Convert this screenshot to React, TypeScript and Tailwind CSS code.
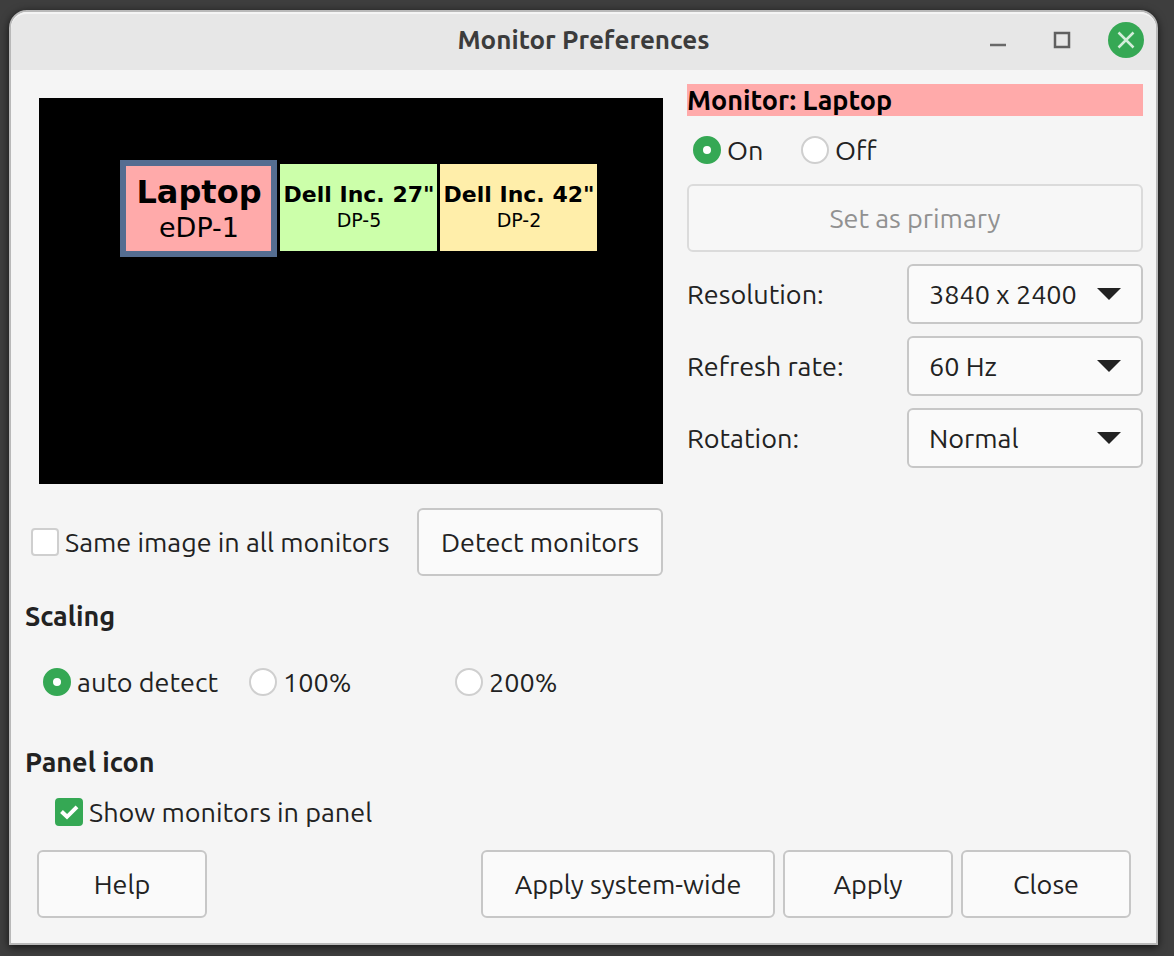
import { useState, type ButtonHTMLAttributes } from 'react';
import clsx from 'clsx';

interface MonitorInfo {
  name: string;
  port: string;
  tone: string;
}

const MONITORS: MonitorInfo[] = [
  { name: 'Laptop', port: 'eDP-1', tone: 'bg-[#ffaaaa]' },
  { name: 'Dell Inc. 27"', port: 'DP-5', tone: 'bg-[#ccffaa]' },
  { name: 'Dell Inc. 42"', port: 'DP-2', tone: 'bg-[#ffeeaa]' },
];

function Button({ className, ...props }: ButtonHTMLAttributes<HTMLButtonElement>) {
  return (
    <button
      type="button"
      className={clsx(
        'h-17 rounded-md border-2 border-[#c7c7c7] bg-[#fafafa] whitespace-nowrap disabled:border-[#dbdbdb] disabled:bg-[#f7f7f7] disabled:text-[#919191]',
        className
      )}
      {...props}
    />
  );
}

interface RadioProps {
  name: string;
  label: string;
  className?: string;
  defaultChecked?: boolean;
}

function Radio({ name, label, className, defaultChecked }: RadioProps) {
  return (
    <label className={clsx('flex h-7 items-center gap-1.5 whitespace-nowrap', className)}>
      <input
        type="radio"
        name={name}
        defaultChecked={defaultChecked}
        className="size-7 shrink-0 appearance-none rounded-full border-2 border-[#cfcfcf] bg-white checked:border-10 checked:border-[#35a854]"
      />
      {label}
    </label>
  );
}

function Checkbox({ label, defaultChecked }: { label: string; defaultChecked?: boolean }) {
  return (
    <label className="flex h-7 items-center gap-1.5 whitespace-nowrap">
      <span className="relative size-7 shrink-0">
        <input
          type="checkbox"
          defaultChecked={defaultChecked}
          className="peer block size-7 appearance-none rounded-[4px] border-2 border-[#cfcfcf] bg-white checked:border-[#35a854] checked:bg-[#35a854]"
        />
        <svg viewBox="0 0 28 28" className="pointer-events-none absolute inset-0 hidden size-7 peer-checked:block">
          <path d="M6.5 13.5 L12 18.8 L22 8.8" fill="none" stroke="#fff" strokeWidth="4" />
        </svg>
      </span>
      {label}
    </label>
  );
}

function SelectRow({ id, label, options }: { id: string; label: string; options: string[] }) {
  return (
    <div className="flex items-center justify-between">
      <label htmlFor={id}>{label}</label>
      <div className="relative w-[236px]">
        <select
          id={id}
          className="block h-15 w-full appearance-none rounded-md border-2 border-[#c7c7c7] bg-[#fafafa] pl-5"
        >
          {options.map((o) => (
            <option key={o}>{o}</option>
          ))}
        </select>
        <svg viewBox="0 0 24 12" className="pointer-events-none absolute top-6 right-[22px] h-3 w-6" fill="#222">
          <path d="M0 0h24L12 12z" />
        </svg>
      </div>
    </div>
  );
}

function TitleBar() {
  return (
    <header className="grid h-[58px] grid-cols-[1fr_auto_1fr] items-center rounded-t-2xl border-t-2 border-[#f4f4f4] bg-[#e7e7e7] pb-1">
      <h1 className="col-start-2 text-[26px] font-semibold text-[#3c3c3c]">Monitor Preferences</h1>
      <div className="flex justify-end gap-7 pr-3">
        <button type="button" aria-label="Minimize" className="size-9">
          <svg viewBox="0 0 36 36" className="size-9">
            <path d="M10 23h16" stroke="#696969" strokeWidth="2.5" />
          </svg>
        </button>
        <button type="button" aria-label="Maximize" className="size-9">
          <svg viewBox="0 0 36 36" className="size-9">
            <rect x="11" y="11" width="14" height="14" fill="none" stroke="#606060" strokeWidth="2.5" />
          </svg>
        </button>
        <button type="button" aria-label="Close window" className="size-9">
          <svg viewBox="0 0 36 36" className="size-9">
            <circle cx="18" cy="18" r="18" fill="#35a854" />
            <path d="M10.5 10.5l15 15M25.5 10.5l-15 15" stroke="#d3edda" strokeWidth="2.5" />
          </svg>
        </button>
      </div>
    </header>
  );
}

export default function App() {
  const [selected, setSelected] = useState(0);
  const current = MONITORS[selected];

  return (
    <div className="min-h-screen bg-[#3e3e3e] pt-2.5 pr-4 pb-[11px] pl-[9px] font-['Ubuntu','Noto_Sans',sans-serif] text-[27px] leading-8 text-[#222]">
      <div className="rounded-t-[18px] border-2 border-[#b9b9b9] bg-[#f5f5f5] shadow-[0_2px_8px_rgba(0,0,0,0.7)]">
        <TitleBar />

        <main className="flex gap-6 pt-3.5 pr-[13px] pl-3.5">
          <div className="min-w-0 flex-1">
            {/* Monitor layout area */}
            <div className="mt-3.5 ml-3.5 flex h-[386px] items-start justify-center gap-[3px] bg-black pt-[62px] pl-3.5 font-['DejaVu_Sans',sans-serif] text-black">
              {MONITORS.map((m, i) => (
                <button
                  key={m.port}
                  type="button"
                  onClick={() => setSelected(i)}
                  className={clsx(
                    'flex w-[157px] flex-col items-center pl-0.5 whitespace-nowrap',
                    m.tone,
                    i === selected ? 'h-[97px] border-6 border-[#556d91] pt-2.5' : 'mt-1 h-[87px] pt-[18px]'
                  )}
                >
                  <span className={clsx('font-bold', i === 0 ? 'text-[32px] leading-8' : 'text-[22px] leading-[26px]')}>
                    {m.name}
                  </span>
                  <span className={i === 0 ? 'text-[27px] leading-10' : 'text-[19px] leading-6'}>{m.port}</span>
                </button>
              ))}
            </div>

            <div className="mt-6 flex items-center justify-between pl-1.5">
              <Checkbox label="Same image in all monitors" />
              <Button className="w-[246px]">Detect monitors</Button>
            </div>

            <h2 className="mt-6 font-bold">Scaling</h2>
            <div className="mt-9 flex pl-[18px]">
              <Radio name="scaling" label="auto detect" className="w-[206px]" defaultChecked />
              <Radio name="scaling" label="100%" className="w-[206px]" />
              <Radio name="scaling" label="200%" />
            </div>

            <h2 className="mt-[50px] font-bold">Panel icon</h2>
            <div className="mt-5 pl-[30px]">
              <Checkbox label="Show monitors in panel" defaultChecked />
            </div>
          </div>

          <div className="w-[456px] shrink-0">
            <h2 className={clsx('font-bold text-black', current.tone)}>Monitor: {current.name}</h2>
            <div className="my-5 flex pl-1.5">
              <Radio name="power" label="On" className="w-[108px]" defaultChecked />
              <Radio name="power" label="Off" />
            </div>
            <Button className="w-full" disabled>
              Set as primary
            </Button>
            <div className="mt-3 flex flex-col gap-3">
              <SelectRow id="resolution" label="Resolution:" options={['3840 x 2400', '1920 x 1200']} />
              <SelectRow id="refresh" label="Refresh rate:" options={['60 Hz', '48 Hz']} />
              <SelectRow id="rotation" label="Rotation:" options={['Normal', 'Left', 'Right', 'Inverted']} />
            </div>
          </div>
        </main>

        <footer className="flex gap-2 pt-6 pr-[25px] pb-[25px] pl-[26px]">
          <Button className="mr-auto w-[170px]">Help</Button>
          <Button className="w-[294px]">Apply system-wide</Button>
          <Button className="w-[170px]">Apply</Button>
          <Button className="w-[170px]">Close</Button>
        </footer>
      </div>
    </div>
  );
}
